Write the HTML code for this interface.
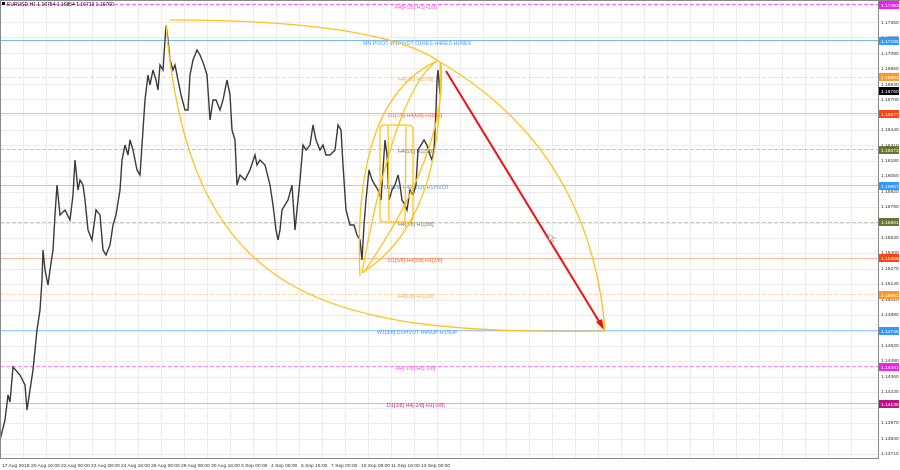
<!DOCTYPE html>
<html><head><meta charset="utf-8"><style>
html,body{margin:0;padding:0;background:#fff;width:900px;height:470px;overflow:hidden;font-family:"Liberation Sans",sans-serif}
</style></head><body>
<svg width="900" height="470" viewBox="0 0 900 470" xmlns="http://www.w3.org/2000/svg" font-family="Liberation Sans, sans-serif">
<rect width="900" height="470" fill="#fff"/>
<g stroke="#ececec" stroke-width="1">
<line x1="23.5" y1="0" x2="23.5" y2="458"/><line x1="46.5" y1="0" x2="46.5" y2="458"/><line x1="69.5" y1="0" x2="69.5" y2="458"/><line x1="92.5" y1="0" x2="92.5" y2="458"/><line x1="115.5" y1="0" x2="115.5" y2="458"/><line x1="138.5" y1="0" x2="138.5" y2="458"/><line x1="161.5" y1="0" x2="161.5" y2="458"/><line x1="184.5" y1="0" x2="184.5" y2="458"/><line x1="207.5" y1="0" x2="207.5" y2="458"/><line x1="230.5" y1="0" x2="230.5" y2="458"/><line x1="253.5" y1="0" x2="253.5" y2="458"/><line x1="276.5" y1="0" x2="276.5" y2="458"/><line x1="299.5" y1="0" x2="299.5" y2="458"/><line x1="322.5" y1="0" x2="322.5" y2="458"/><line x1="345.5" y1="0" x2="345.5" y2="458"/><line x1="368.5" y1="0" x2="368.5" y2="458"/><line x1="391.5" y1="0" x2="391.5" y2="458"/><line x1="414.5" y1="0" x2="414.5" y2="458"/><line x1="437.5" y1="0" x2="437.5" y2="458"/><line x1="460.5" y1="0" x2="460.5" y2="458"/><line x1="483.5" y1="0" x2="483.5" y2="458"/><line x1="506.5" y1="0" x2="506.5" y2="458"/><line x1="529.5" y1="0" x2="529.5" y2="458"/><line x1="552.5" y1="0" x2="552.5" y2="458"/><line x1="575.5" y1="0" x2="575.5" y2="458"/><line x1="598.5" y1="0" x2="598.5" y2="458"/><line x1="621.5" y1="0" x2="621.5" y2="458"/><line x1="644.5" y1="0" x2="644.5" y2="458"/><line x1="667.5" y1="0" x2="667.5" y2="458"/><line x1="690.5" y1="0" x2="690.5" y2="458"/><line x1="713.5" y1="0" x2="713.5" y2="458"/><line x1="736.5" y1="0" x2="736.5" y2="458"/><line x1="759.5" y1="0" x2="759.5" y2="458"/><line x1="782.5" y1="0" x2="782.5" y2="458"/><line x1="805.5" y1="0" x2="805.5" y2="458"/><line x1="828.5" y1="0" x2="828.5" y2="458"/><line x1="851.5" y1="0" x2="851.5" y2="458"/>
<line x1="0" y1="22.5" x2="878" y2="22.5"/><line x1="0" y1="37.5" x2="878" y2="37.5"/><line x1="0" y1="53.5" x2="878" y2="53.5"/><line x1="0" y1="68.5" x2="878" y2="68.5"/><line x1="0" y1="84.5" x2="878" y2="84.5"/><line x1="0" y1="99.5" x2="878" y2="99.5"/><line x1="0" y1="115.5" x2="878" y2="115.5"/><line x1="0" y1="130.5" x2="878" y2="130.5"/><line x1="0" y1="145.5" x2="878" y2="145.5"/><line x1="0" y1="161.5" x2="878" y2="161.5"/><line x1="0" y1="176.5" x2="878" y2="176.5"/><line x1="0" y1="192.5" x2="878" y2="192.5"/><line x1="0" y1="207.5" x2="878" y2="207.5"/><line x1="0" y1="223.5" x2="878" y2="223.5"/><line x1="0" y1="238.5" x2="878" y2="238.5"/><line x1="0" y1="253.5" x2="878" y2="253.5"/><line x1="0" y1="269.5" x2="878" y2="269.5"/><line x1="0" y1="284.5" x2="878" y2="284.5"/><line x1="0" y1="300.5" x2="878" y2="300.5"/><line x1="0" y1="315.5" x2="878" y2="315.5"/><line x1="0" y1="331.5" x2="878" y2="331.5"/><line x1="0" y1="346.5" x2="878" y2="346.5"/><line x1="0" y1="361.5" x2="878" y2="361.5"/><line x1="0" y1="377.5" x2="878" y2="377.5"/><line x1="0" y1="392.5" x2="878" y2="392.5"/><line x1="0" y1="408.5" x2="878" y2="408.5"/><line x1="0" y1="423.5" x2="878" y2="423.5"/><line x1="0" y1="439.5" x2="878" y2="439.5"/><line x1="0" y1="454.5" x2="878" y2="454.5"/>
</g>
<line x1="0" y1="4.5" x2="878" y2="4.5" stroke="#ff66ff" stroke-dasharray="4,2"/>
<line x1="0" y1="40.5" x2="878" y2="40.5" stroke="#77b8ff"/>
<line x1="0" y1="77.5" x2="878" y2="77.5" stroke="#ffd9a8" stroke-dasharray="4,2"/>
<line x1="0" y1="113.5" x2="878" y2="113.5" stroke="#ffb8a0"/>
<line x1="0" y1="149.5" x2="878" y2="149.5" stroke="#c8c8b8" stroke-dasharray="4,2"/>
<line x1="0" y1="185.5" x2="878" y2="185.5" stroke="#a8d0ff"/>
<line x1="0" y1="222.5" x2="878" y2="222.5" stroke="#c8c8b8" stroke-dasharray="4,2"/>
<line x1="0" y1="258.5" x2="878" y2="258.5" stroke="#ffb8a0"/>
<line x1="0" y1="294.5" x2="878" y2="294.5" stroke="#ffd9a8" stroke-dasharray="4,2"/>
<line x1="0" y1="330.5" x2="878" y2="330.5" stroke="#9ccaff"/>
<line x1="0" y1="366.5" x2="878" y2="366.5" stroke="#ff88ff" stroke-dasharray="4,2"/>
<line x1="0" y1="403.5" x2="878" y2="403.5" stroke="#f0a8d8"/>
<g font-size="5.3">
<text x="395" y="9" fill="#ff44ff">H4[+1/8] H1[+1/8]</text>
<text x="363" y="45" fill="#4499ff">MN PIVOT W1PIVOT D1RES H4RES H1RES</text>
<text x="398" y="81" fill="#ffaa44">H4[7/8] H1[7/8]</text>
<text x="388" y="117" fill="#ff6633">D1[7/8] H4[6/8] H1[6/8]</text>
<text x="398" y="153" fill="#777755">H4[5/8] H1[5/8]</text>
<text x="384" y="189" fill="#4499ff">D1[6/8] H4PIVOT H1PIVOT</text>
<text x="398" y="226" fill="#777755">H4[3/8] H1[3/8]</text>
<text x="388" y="262" fill="#ff6633">D1[5/8] H4[2/8] H1[2/8]</text>
<text x="398" y="298" fill="#ffaa44">H4[1/8] H1[1/8]</text>
<text x="377" y="334" fill="#4499ff">W1[3/8] D1PIVOT H4SUP H1SUP</text>
<text x="396" y="370" fill="#ff44ff">H4[-1/8] H1[-1/8]</text>
<text x="387" y="407" fill="#cc2299">D1[3/8] H4[-2/8] H1[-2/8]</text>
</g>
<polyline fill="none" stroke="#3a3a3a" stroke-width="1.4" points="0,440 5,420 8,395 10,402 13,367 20,375 25,385 27,410 30,390 33,370 37,330 40,310 42,280 43,250 45,270 48,285 50,270 53,250 55,215 57,185 60,215 65,210 70,220 73,195 75,160 78,190 80,180 83,185 85,200 88,230 92,240 96,210 100,215 103,250 106,255 110,245 113,225 116,215 120,190 122,160 125,145 128,155 130,140 133,150 137,170 140,175 143,130 145,100 148,75 150,85 153,70 156,80 158,90 160,65 163,70 165,40 166,25 168,40 170,60 173,70 175,65 178,80 181,95 185,110 188,110 190,75 193,60 197,50 200,55 204,65 207,75 210,120 213,100 216,100 220,110 223,100 227,80 230,95 232,130 235,140 237,185 240,175 245,180 250,170 255,155 257,165 260,160 265,165 270,185 273,205 276,230 278,240 280,230 282,210 285,205 288,200 292,185 295,230 297,210 300,180 303,145 306,150 310,145 313,125 316,140 320,150 323,145 326,155 330,155 335,150 338,125 341,130 343,165 346,210 350,225 354,225 357,235 360,240 362,260 364,225 366,200 369,170 372,180 375,185 378,190 381,200 383,170 385,140 387,155 389,200 392,190 395,185 398,175 400,185 402,200 405,205 407,210 410,190 413,195 416,185 418,150 421,145 424,140 427,145 430,155 432,160 434,150 436,110 437,80 438,70 440,95"/>
<g fill="none" stroke="#ffc21a" stroke-width="1.3">
<path d="M170,20 Q380,20 440,62"/>
<path d="M440,62 Q590,150 605,330"/>
<path d="M166,25 C190,300 320,335 605,331"/>
<path d="M360,276 Q352,100 437,61"/>
<path d="M362,273 Q395,90 437,61"/>
<path d="M362,273 Q445,220 440,62"/>
<path d="M364,272 Q448,150 441,62"/>
<rect x="380" y="125" width="33" height="97" rx="4"/>
<line x1="388" y1="126" x2="389" y2="221"/>
<line x1="406" y1="126" x2="405" y2="221"/>
</g>
<line x1="446" y1="71" x2="600" y2="323" stroke="#ee1111" stroke-width="2"/>
<polygon points="604,330 596,322 602,319" fill="#ee1111"/>
<path d="M549,234 l0,7 l2,-2 l2,3 l1,-1 l-2,-3 l3,0 z" fill="#fff" stroke="#999" stroke-width="0.6"/>
<text x="7" y="6" font-size="5" fill="#000">EURUSD,H1 1.16754 1.16854 1.16713 1.16760</text>
<rect x="2" y="2" width="3" height="3" fill="#000"/>
<line x1="878.5" y1="0" x2="878.5" y2="459" stroke="#888"/>
<line x1="0" y1="458.5" x2="879" y2="458.5" stroke="#888"/>
<line x1="0.5" y1="0" x2="0.5" y2="459" stroke="#888"/>
<line x1="0" y1="0.5" x2="900" y2="0.5" stroke="#888"/>
<g font-size="4.9" fill="#333">
<text x="881" y="24">1.17350</text><text x="881" y="39">1.17220</text><text x="881" y="55">1.17090</text><text x="881" y="70">1.16960</text><text x="881" y="86">1.16830</text><text x="881" y="101">1.16700</text><text x="881" y="131">1.16440</text><text x="881" y="147">1.16310</text><text x="881" y="162">1.16180</text><text x="881" y="177">1.16050</text><text x="881" y="193">1.15920</text><text x="881" y="208">1.15790</text><text x="881" y="239">1.15530</text><text x="881" y="254">1.15400</text><text x="881" y="270">1.15270</text><text x="881" y="285">1.15140</text><text x="881" y="301">1.15010</text><text x="881" y="316">1.14880</text><text x="881" y="347">1.14620</text><text x="881" y="362">1.14490</text><text x="881" y="378">1.14360</text><text x="881" y="393">1.14230</text><text x="881" y="424">1.13970</text><text x="881" y="440">1.13840</text><text x="881" y="455">1.13710</text>
</g>
<g font-size="4.9" fill="#fff">
<rect x="879" y="1" width="20" height="8" fill="#ee22ee"/><text x="881" y="7">1.17493</text>
<rect x="879" y="37" width="20" height="8" fill="#3399ff"/><text x="881" y="43">1.17195</text>
<rect x="879" y="73" width="20" height="8" fill="#ff9922"/><text x="881" y="79">1.16882</text>
<rect x="879" y="87" width="20" height="8" fill="#000"/><text x="881" y="93">1.16760</text>
<rect x="879" y="110" width="20" height="8" fill="#ff4411"/><text x="881" y="116">1.16577</text>
<rect x="879" y="146" width="20" height="8" fill="#667733"/><text x="881" y="152">1.16272</text>
<rect x="879" y="182" width="20" height="8" fill="#3399ff"/><text x="881" y="188">1.15967</text>
<rect x="879" y="218" width="20" height="8" fill="#667733"/><text x="881" y="224">1.15661</text>
<rect x="879" y="254" width="20" height="8" fill="#ff4411"/><text x="881" y="260">1.15356</text>
<rect x="879" y="291" width="20" height="8" fill="#ff9922"/><text x="881" y="297">1.15051</text>
<rect x="879" y="327" width="20" height="8" fill="#3399ff"/><text x="881" y="333">1.14746</text>
<rect x="879" y="363" width="20" height="8" fill="#ee22ee"/><text x="881" y="369">1.14441</text>
<rect x="879" y="400" width="20" height="8" fill="#bb1188"/><text x="881" y="406">1.14136</text>
</g>
<g font-size="4.9" fill="#333">
<text x="2" y="467">17 Aug 2018</text><text x="31" y="467">20 Aug 16:00</text><text x="61" y="467">22 Aug 00:00</text><text x="91" y="467">23 Aug 08:00</text><text x="121" y="467">24 Aug 16:00</text><text x="151" y="467">28 Aug 00:00</text><text x="181" y="467">29 Aug 08:00</text><text x="211" y="467">30 Aug 16:00</text><text x="241" y="467">3 Sep 00:00</text><text x="271" y="467">4 Sep 08:00</text><text x="301" y="467">5 Sep 16:00</text><text x="331" y="467">7 Sep 00:00</text><text x="361" y="467">10 Sep 08:00</text><text x="391" y="467">11 Sep 16:00</text><text x="421" y="467">13 Sep 00:00</text>
</g>
</svg>
</body></html>
